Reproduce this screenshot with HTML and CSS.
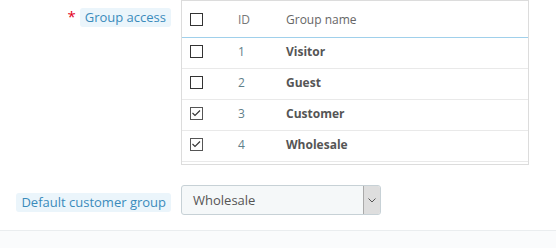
FILE: index.html
```html
<!DOCTYPE html>
<html>
<head>
<meta charset="utf-8">
<link rel="stylesheet" href="styles.css">
</head>
<body>
<div class="panel">
  <div class="form-group">
    <div class="label-col"><span class="req">*</span><span class="lbl">Group access</span></div>
    <div class="ctrl">
      <div class="groups">
        <div class="row head">
          <div class="c-check"><span class="cb"></span></div>
          <div class="c-id">ID</div>
          <div class="c-name">Group name</div>
        </div>
        <div class="row">
          <div class="c-check"><span class="cb"></span></div>
          <div class="c-id">1</div>
          <div class="c-name strong">Visitor</div>
        </div>
        <div class="row">
          <div class="c-check"><span class="cb"></span></div>
          <div class="c-id">2</div>
          <div class="c-name strong">Guest</div>
        </div>
        <div class="row">
          <div class="c-check"><span class="cb checked"><svg width="11" height="11" viewBox="0 0 11 11"><polyline points="1.5,5 4,7.5 9,2.5" fill="none" stroke="#333" stroke-width="1.1"/></svg></span></div>
          <div class="c-id">3</div>
          <div class="c-name strong">Customer</div>
        </div>
        <div class="row">
          <div class="c-check"><span class="cb checked"><svg width="11" height="11" viewBox="0 0 11 11"><polyline points="1.5,5 4,7.5 9,2.5" fill="none" stroke="#333" stroke-width="1.1"/></svg></span></div>
          <div class="c-id">4</div>
          <div class="c-name strong">Wholesale</div>
        </div>
      </div>
    </div>
  </div>
  <div class="form-group second">
    <div class="label-col"><span class="lbl">Default customer group</span></div>
    <div class="ctrl">
      <div class="select">
        <span class="sel-text">Wholesale</span>
        <span class="arrow"><svg width="8" height="5" viewBox="0 0 8 5"><polyline points="0.5,0.5 4,4 7.5,0.5" fill="none" stroke="#555" stroke-width="1"/></svg></span>
      </div>
    </div>
  </div>
</div>
<div class="footer"></div>
</body>
</html>
```
FILE: styles.css
```css
html, body {
  margin: 0;
  padding: 0;
  background: #fff;
  font-family: "Open Sans", "Liberation Sans", sans-serif;
  font-size: 13px;
  color: #555;
}
.panel {
  height: 231px;
  border-bottom: 1px solid #eaedef;
  box-sizing: border-box;
}
.footer {
  height: 17px;
  background: #fafbfc;
}
.form-group {
  display: flex;
  align-items: flex-start;
  gap: 10px;
}
.form-group.second {
  margin-top: 20px;
}
.label-col {
  width: 171px;
  display: flex;
  justify-content: flex-end;
  align-items: flex-start;
  padding-top: 8px;
}
.req {
  color: #e3001b;
  font-size: 15px;
  line-height: 15px;
  margin-right: 4px;
  margin-top: 1px;
}
.lbl {
  display: inline-block;
  background: #ebf5fb;
  color: #3a8bbb;
  line-height: 19px;
  height: 19px;
  padding: 0 5px;
  border-radius: 3px;
  white-space: nowrap;
}
.ctrl {
  width: 348px;
}
.groups {
  border: 1px solid #dcdcdc;
  padding-bottom: 2px;
  font-size: 12px;
}
.row {
  display: flex;
  align-items: center;
  height: 27px;
  padding-bottom: 3px;
  border-bottom: 1px solid #e9e9e9;
}
.row.head {
  height: 36px;
  padding-bottom: 0;
  border-bottom-color: #a0d0eb;
  color: #666;
}
.c-check {
  width: 56px;
  padding-left: 8px;
  box-sizing: border-box;
  display: flex;
  align-items: center;
}
.c-id {
  width: 48px;
  color: #5f7f8a;
}
.head .c-id {
  color: #777;
}
.c-name {
  flex: 1;
}
.strong {
  font-weight: 700;
  color: #555;
}
.cb {
  display: block;
  width: 11px;
  height: 11px;
  border: 1px solid #333;
  background: #fff;
}
.cb.checked {
  border-color: #555;
}
.cb svg {
  display: block;
}
.select {
  width: 200px;
  height: 30px;
  box-sizing: border-box;
  border: 1px solid #c7d1d6;
  border-radius: 3px;
  background: #f5f8f9;
  display: flex;
  align-items: center;
  overflow: hidden;
}
.sel-text {
  flex: 1;
  padding-left: 11px;
  color: #555;
}
.arrow {
  width: 16px;
  height: 100%;
  background: #dedede;
  border-left: 1px solid #aaa;
  display: flex;
  align-items: center;
  justify-content: center;
}
.arrow svg {
  display: block;
}
```
